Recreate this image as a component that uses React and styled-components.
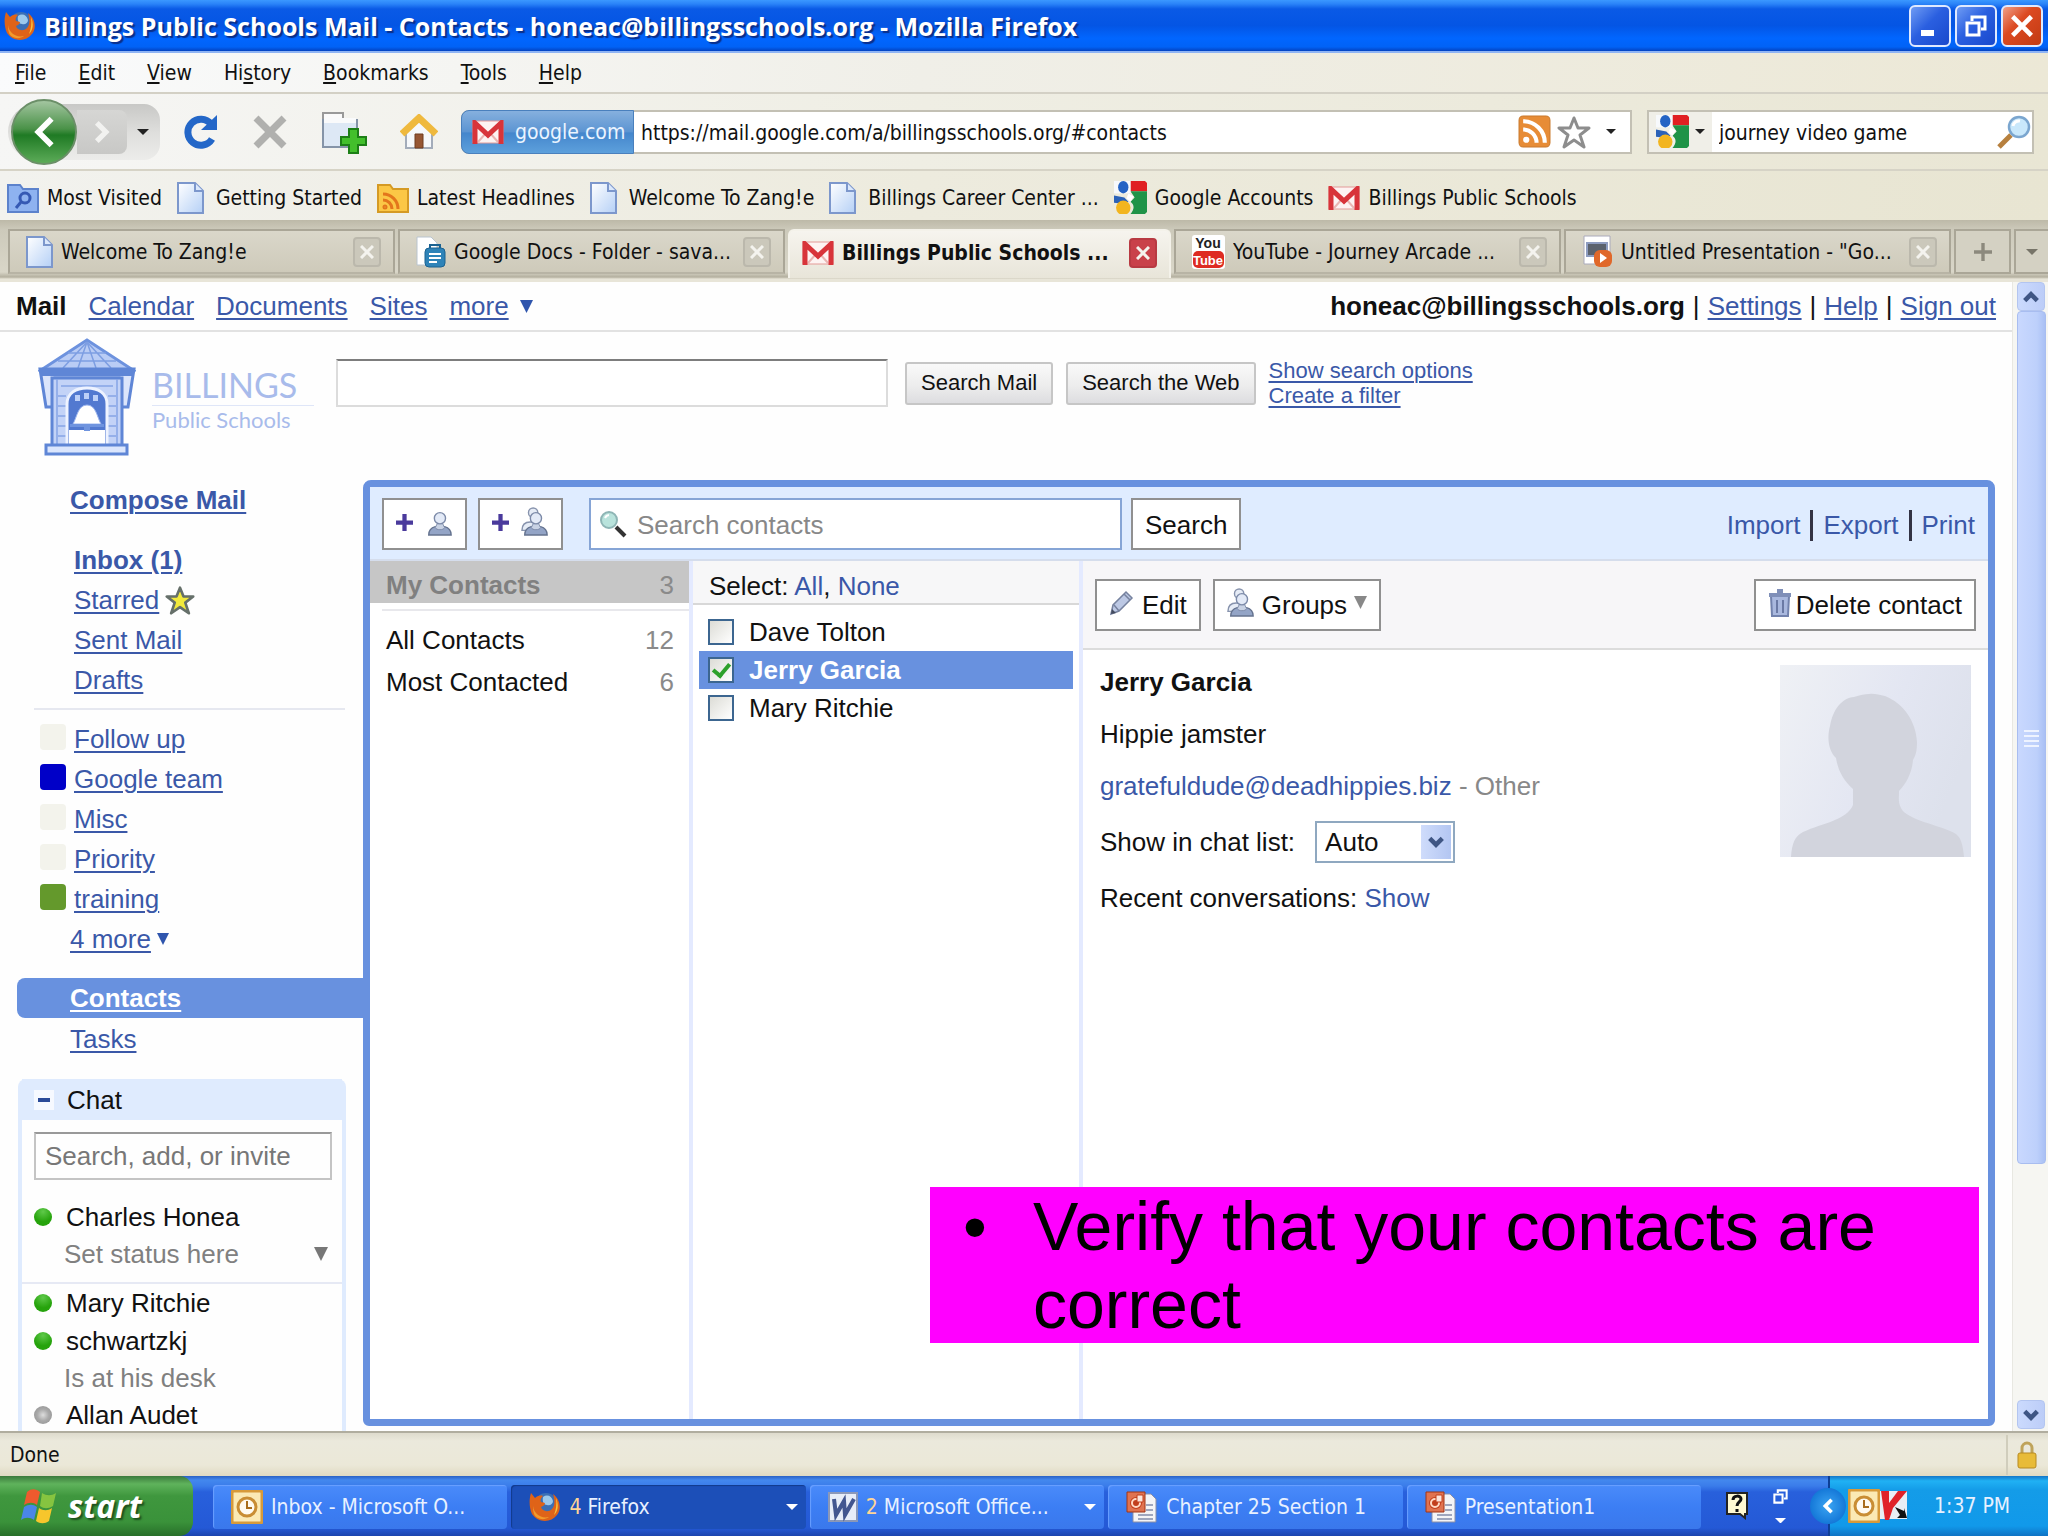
import React from 'react';
import styled, { createGlobalStyle } from 'styled-components';

const chromeFont = '"DejaVu Sans Condensed", "DejaVu Sans", sans-serif';
const pageFont = '"Liberation Sans", Arial, sans-serif';
const linkColor = '#3a58a8';
const panelBlue = '#6891df';
const paleBlue = '#dfebfe';

const GlobalStyle = createGlobalStyle`
  * {
    box-sizing: border-box;
  }

  body {
    margin: 0;
    font-family: ${chromeFont};
    font-size: 21px;
    color: #111;
  }

  button, input, select {
    font: inherit;
    color: inherit;
    margin: 0;
    padding: 0;
    border: 0;
    background: none;
    border-radius: 0;
  }

  svg {
    display: block;
    flex: none;
  }
`;

/* ---------- Window ---------- */

const Window = styled.div`
  display: flex;
  flex-direction: column;
  height: 100vh;
  overflow: hidden;
  white-space: nowrap;
`;

const TitleBar = styled.header`
  display: flex;
  align-items: center;
  gap: 8px;
  height: 53px;
  flex: none;
  padding: 0 5px 0 4px;
  border-bottom: 2px solid #8fb4f4;
  background: linear-gradient(#3b98ff 0, #2a83f8 4px, #0a5ae6 9px, #0455e4 50%, #0166ff 75%, #0162f6 92%, #0443c0);
`;

const WindowTitle = styled.h1`
  flex: 1;
  margin: 0;
  font-family: "Open Sans", "Noto Sans", sans-serif;
  font-weight: bold;
  font-size: 25px;
  line-height: 32px;
  color: #fff;
  text-shadow: 2px 2px 1px #0a2f8a;
`;

const WindowButtons = styled.div`
  display: flex;
  gap: 4px;
`;

const WindowButton = styled.button`
  display: grid;
  place-items: center;
  width: 42px;
  height: 42px;
  border: 2px solid #dfe9ff;
  border-radius: 6px;
  background: ${p => p.$close
    ? 'linear-gradient(135deg, #f0a088, #dc4a22 40%, #c23a12)'
    : 'linear-gradient(135deg, #6f9cf4, #2a5fe0 45%, #1848cc)'};
`;

const MenuBar = styled.nav`
  display: flex;
  align-items: center;
  gap: 32px;
  height: 41px;
  flex: none;
  padding: 0 15px;
  border-bottom: 2px solid #d3d0c5;
  background: linear-gradient(95deg, #fafbfc, #f0efe8 45%, #ece8d6);
`;

const NavBar = styled.div`
  display: flex;
  align-items: center;
  height: 77px;
  flex: none;
  padding: 0 14px 0 8px;
  border-bottom: 2px solid #d6d3c6;
  background: linear-gradient(95deg, #f6f6f5, #efeee4 45%, #e9e6d4);
`;

const Keyhole = styled.div`
  display: flex;
  align-items: center;
  width: 152px;
  height: 56px;
  margin-right: 23px;
  border-radius: 28px 16px 16px 28px;
  background: linear-gradient(#c8c8c6, #dededc 50%, #ececea);
`;

const RoundButton = styled.button`
  display: grid;
  place-items: center;
  width: 66px;
  height: 66px;
  margin: 0 0 0 3px;
  flex: none;
  border-radius: 50%;
  border: 2px solid #6b8f68;
  background: linear-gradient(#a3c5a0, #4a9248 45%, #1f7a24 55%, #5cab58);
`;

const ForwardButton = styled.button`
  display: grid;
  place-items: center;
  width: 50px;
  height: 44px;
  border-radius: 0 8px 8px 0;
  background: linear-gradient(#d6d6d4, #c8c8c6);
`;

const IconButton = styled.button`
  display: grid;
  place-items: center;
  width: ${p => p.$width || 36}px;
  height: 44px;
`;

const NavIcons = styled.div`
  display: flex;
  align-items: center;
  gap: 33px;
  margin-right: 25px;
`;

const LocationBar = styled.div`
  display: flex;
  align-items: center;
  flex: 1;
  height: 44px;
  margin-right: 15px;
  padding-right: 4px;
  border: 2px solid #c3c0b4;
  border-radius: 8px 0 0 8px;
  background: #fff;
`;

const Identity = styled.div`
  display: flex;
  align-items: center;
  gap: 11px;
  align-self: stretch;
  width: 173px;
  margin: -2px 0 -2px -2px;
  padding-left: 10px;
  border: 1px solid #4a80bd;
  border-radius: 8px 0 0 8px;
  color: #eaf4ff;
  background: linear-gradient(#86b0de, #5b94d2 50%, #4486cc 52%, #5da0dc);
`;

const LocationInput = styled.input`
  flex: 1;
  min-width: 0;
  padding: 2px 0 0 7px;
  outline: 0;
`;

const SearchBar = styled.div`
  display: flex;
  align-items: center;
  width: 387px;
  height: 44px;
  border: 2px solid #c3c0b4;
  background: #fff;
`;

const EngineButton = styled.button`
  display: flex;
  align-items: center;
  justify-content: center;
  gap: 6px;
  align-self: stretch;
  width: 63px;
  background: #f0efe8;
`;

const SearchInput = styled.input`
  flex: 1;
  min-width: 0;
  padding: 2px 0 0 7px;
  outline: 0;
`;

const BookmarksBar = styled.nav`
  display: flex;
  align-items: center;
  gap: 15px;
  height: 49px;
  flex: none;
  padding: 4px 7px 0;
  background: linear-gradient(95deg, #f2f2ee, #edebde 45%, #e8e5d2);
`;

const Bookmark = styled.a`
  display: flex;
  align-items: center;
  gap: ${p => p.$gap || 8}px;
  color: #111;
  text-decoration: none;
`;

const TabStrip = styled.div`
  display: flex;
  align-items: flex-end;
  height: 62px;
  flex: none;
  padding: 8px 0 4px 8px;
  background: linear-gradient(#bdb9a8 0, #cdcabb 10px, #d9d6c8 52px, #b4b09f 57px, #e8e5d8 59px);
`;

const Tab = styled.div`
  display: flex;
  align-items: center;
  gap: 8px;
  flex: 1 1 0;
  min-width: 0;
  height: 45px;
  margin: 0 3px 4px 0;
  padding: 0 12px 0 16px;
  border: 2px solid #aaa697;
  border-bottom-color: #b8b4a5;
  background: linear-gradient(#dad7ca, #cecaba);

  ${p => p.$active && `
    height: 49px;
    margin-bottom: 0;
    padding: 0 12px 4px;
    border: 2px solid #f4f2ea;
    border-bottom: 0;
    border-radius: 6px 6px 0 0;
    background: linear-gradient(#f6f4ee, #e8e5d9);
    font-weight: bold;
  `}
`;

const TabTitle = styled.button`
  flex: 1;
  min-width: 0;
  overflow: hidden;
  text-align: left;
  white-space: nowrap;
`;

const TabClose = styled.button`
  display: grid;
  place-items: center;
  width: 28px;
  height: 30px;
  flex: none;
  border: 2px solid ${p => (p.$active ? '#b83a42' : '#bbb8ac')};
  border-radius: 4px;
  background: ${p => (p.$active ? '#c9414a' : '#cbc8bb')};
`;

const TabTool = styled.button`
  display: grid;
  place-items: center;
  width: ${p => p.$width}px;
  height: 45px;
  margin: 0 3px 4px 0;
  border: 2px solid #aaa697;
  background: #d4d1c3;

  &:last-child {
    margin-right: 0;
    border-right: 0;
  }
`;

/* ---------- Page ---------- */

const Viewport = styled.div`
  position: relative;
  display: flex;
  flex: 1;
  min-height: 0;
  border-bottom: 2px solid #b0ad9f;
`;

const Page = styled.div`
  display: flex;
  flex-direction: column;
  flex: 1;
  min-width: 0;
  overflow: hidden;
  background: #fefefe;
  font-family: ${pageFont};
  font-size: 26px;
`;

const GoogleBar = styled.nav`
  display: flex;
  align-items: center;
  gap: 22px;
  height: 50px;
  flex: none;
  padding: 0 16px;
  border-bottom: 2px solid #e2e2e2;
`;

const MoreApps = styled.span`
  display: flex;
  align-items: center;
  gap: 11px;
`;

const Account = styled.div`
  display: flex;
  gap: 8px;
  margin-left: auto;
`;

const PageLink = styled.a`
  color: ${linkColor};
  font-weight: ${p => (p.$bold ? 'bold' : 'normal')};
  text-underline-offset: 3px;
  text-decoration: ${p => (p.$plain ? 'none' : 'underline')};
  text-decoration-thickness: 2px;
`;

const Masthead = styled.div`
  display: flex;
  align-items: flex-start;
  height: 148px;
  flex: none;
  padding: 6px 0 0 38px;
`;

const Brand = styled.div`
  display: flex;
  gap: 16px;
  width: 298px;
`;

const BrandText = styled.div`
  flex: 1;
  margin-right: 22px;
  padding-top: 26px;
  font-family: Lato, sans-serif;
  font-size: 22px;
  line-height: 27px;
  color: #a8bbeb;

  strong {
    display: block;
    font-weight: normal;
    font-size: 34px;
    line-height: 41px;
    border-bottom: 1px solid #dfe6f8;
  }
`;

const MailSearch = styled.form`
  display: flex;
  align-items: center;
  gap: 13px;
  padding-top: 20px;
`;

const MailInput = styled.input`
  width: 552px;
  height: 48px;
  margin-right: 4px;
  border: 2px solid #dcdcdc;
  border-top-color: #7d7d7d;
  background: #fff;
`;

const MailButton = styled.button`
  height: 43px;
  padding: 0 14px;
  border: 2px solid #c6c6c6;
  border-radius: 3px;
  font-size: 22px;
  background: linear-gradient(#f9f9f9, #ededed 55%, #dddde0);
`;

const SearchLinks = styled.div`
  display: flex;
  flex-direction: column;
  font-size: 22px;
  line-height: 25px;
`;

const Columns = styled.div`
  display: flex;
  flex: 1;
  min-height: 0;
  padding-right: 17px;
`;

const Sidebar = styled.aside`
  width: 363px;
  flex: none;
  line-height: 40px;
`;

const NavBlock = styled.div`
  display: flex;
  flex-direction: column;
  align-items: flex-start;
  padding: ${p => p.$pad};
`;

const Rule = styled.hr`
  height: 2px;
  margin: 8px 18px 9px 34px;
  border: 0;
  background: #e6e8f0;
`;

const NavRow = styled.div`
  display: flex;
  align-items: center;
  gap: 6px;
  height: 40px;
`;

const Swatch = styled.span`
  width: 26px;
  height: 26px;
  margin: 0 2px 4px 0;
  border-radius: 4px;
  background: ${p => p.$color};
`;

const ContactsTab = styled.a`
  display: block;
  height: 40px;
  margin: 19px 0 1px 17px;
  padding-left: 53px;
  border-radius: 8px 0 0 8px;
  background: ${panelBlue};
  color: #fff;
  font-weight: bold;
  text-underline-offset: 3px;
`;

const ChatBox = styled.section`
  margin: 20px 17px 0 18px;
  border: solid ${paleBlue};
  border-width: 0 4px;
  border-radius: 8px 8px 0 0;
  line-height: 36px;
`;

const ChatHeader = styled.h2`
  display: flex;
  align-items: center;
  gap: 13px;
  height: 41px;
  margin: 0;
  padding-left: 12px;
  background: ${paleBlue};
  font-size: 26px;
  font-weight: normal;
`;

const Collapse = styled.button`
  display: grid;
  place-items: center;
  width: 20px;
  height: 20px;
  background: #f6f9ff;

  &::after {
    content: '';
    width: 12px;
    height: 4px;
    background: #2a4a98;
  }
`;

const ChatInput = styled.input`
  display: block;
  width: 298px;
  height: 48px;
  margin: 12px 12px 18px;
  padding: 0 9px;
  border: 2px solid #c4c4c4;
  border-top-color: #999;
  font-size: 26px;

  &::placeholder {
    color: #777;
  }
`;

const Person = styled.div`
  display: flex;
  align-items: center;
  gap: 14px;
  height: 38px;
  padding-left: 12px;

  &::before {
    content: '';
    width: 18px;
    height: 18px;
    border-radius: 50%;
    background: ${p => (p.$away
      ? 'radial-gradient(#ddd, #aaa 45%, #8c8c8c)'
      : 'radial-gradient(circle at 50% 20%, #5fc94a, #26a30c 60%)')};
  }
`;

const StatusLine = styled.div`
  display: flex;
  align-items: center;
  justify-content: space-between;
  height: 36px;
  padding: 0 14px 0 42px;
  color: #808080;
`;

const MyStatus = styled.div`
  padding-bottom: 10px;
  border-bottom: 2px solid #e6e9f4;
`;

/* ---------- Contacts panel ---------- */

const Panel = styled.main`
  display: flex;
  flex-direction: column;
  flex: 1;
  min-width: 0;
  margin-bottom: 5px;
  border: 7px solid ${panelBlue};
  border-radius: 8px 8px 6px 6px;
  background: #fff;
`;

const PanelBar = styled.div`
  display: flex;
  align-items: center;
  gap: 11px;
  height: 74px;
  flex: none;
  padding: 2px 13px 0 12px;
  border-bottom: 2px solid #d5ddec;
  background: #dfecff;
`;

const BoxButton = styled.button`
  display: flex;
  align-items: center;
  justify-content: center;
  gap: ${p => p.$gap || 0}px;
  height: 52px;
  padding: 2px 12px 0;
  border: 2px solid #909090;
  background: #fff;

  svg {
    margin-bottom: 6px;
  }
`;

const ContactSearch = styled.label`
  display: flex;
  align-items: center;
  gap: 10px;
  width: 533px;
  height: 52px;
  margin: 0 -2px 0 15px;
  padding-left: 8px;
  border: 2px solid #86a5d6;
  background: #fff;

  input {
    flex: 1;
    min-width: 0;
    padding-top: 2px;
    outline: 0;
  }

  input::placeholder {
    color: #888;
  }
`;

const PanelLinks = styled.div`
  display: flex;
  align-items: center;
  margin-left: auto;
  padding-top: 2px;

  a + a {
    margin-left: 10px;
    padding-left: 10px;
    border-left: 3px solid #334;
  }
`;

const PanelBody = styled.div`
  display: flex;
  flex: 1;
  min-height: 0;
`;

const GroupList = styled.div`
  width: 323px;
  flex: none;
  border-right: 4px solid #e4eaff;
`;

const Group = styled.button`
  display: flex;
  justify-content: space-between;
  align-items: center;
  width: 100%;
  height: 42px;
  padding: 0 15px 0 16px;

  span {
    color: #8a8a8a;
  }

  ${p => p.$active && `
    padding-top: 6px;
    background: #c6c6c6;
    color: #808080;
    font-weight: bold;

    span {
      font-weight: normal;
    }
  `}
`;

const GroupRule = styled.hr`
  height: 2px;
  margin: 6px 0 8px 12px;
  border: 0;
  background: #e8e8ec;
`;

const ContactList = styled.div`
  width: 390px;
  flex: none;
  border-right: 4px solid #e4eaff;
`;

const SelectBar = styled.div`
  display: flex;
  align-items: center;
  height: 44px;
  margin-bottom: 8px;
  padding: 8px 16px 0;
  border-bottom: 2px solid #d8d8d8;
  background: #f7f7f8;
`;

const Contact = styled.label`
  display: flex;
  align-items: center;
  gap: 15px;
  height: 38px;
  margin: 0 6px;
  padding-left: 9px;

  ${p => p.$active && `
    background: ${panelBlue};
    color: #fff;
    font-weight: bold;
  `}
`;

const Check = styled.input`
  display: grid;
  place-items: center;
  appearance: none;
  width: 26px;
  height: 26px;
  border: 2px solid #3c6690;
  background: linear-gradient(135deg, #dcdcd6, #fff);

  &:checked::after {
    content: '';
    width: 7px;
    height: 13px;
    margin-bottom: 4px;
    border: solid #2da12b;
    border-width: 0 4px 4px 0;
    transform: rotate(40deg);
  }
`;

const Detail = styled.section`
  flex: 1;
  min-width: 0;
`;

const DetailBar = styled.div`
  display: flex;
  align-items: center;
  gap: 12px;
  height: 89px;
  padding: 0 12px;
  border-bottom: 2px solid #dcdcdc;
  background: #f7f6f8;
`;

const Spacer = styled.span`
  flex: 1;
`;

const DetailBody = styled.div`
  display: flex;
  justify-content: space-between;
  align-items: flex-start;
  padding: 15px 17px 0;
`;

const Fields = styled.div`
  display: flex;
  flex-direction: column;
  gap: 22px;
  padding-top: 2px;
  line-height: 30px;
`;

const Name = styled.h2`
  margin: 0;
  font-size: 26px;
`;

const Muted = styled.span`
  color: #888;
`;

const SelectRow = styled.div`
  display: flex;
  align-items: center;
  gap: 20px;
  height: 38px;
`;

const SelectBox = styled.span`
  position: relative;
  display: block;

  select {
    appearance: none;
    width: 140px;
    height: 42px;
    padding-left: 8px;
    border: 2px solid #8fa8c0;
    background: #fff;
  }
`;

/* sits over the native select, so clicks go through it */
const SelectArrow = styled.span`
  position: absolute;
  top: 4px;
  right: 4px;
  display: grid;
  place-items: center;
  width: 30px;
  height: 34px;
  background: linear-gradient(90deg, #cfdcfb, #b3c6f2);
  pointer-events: none;
`;

const Note = styled.ul`
  position: absolute;
  right: 69px;
  bottom: 88px;
  width: 1049px;
  margin: 0;
  padding: 0 60px 0 103px;
  background: #f0f;
  color: #000;
  font-family: ${pageFont};
  font-size: 68px;
  line-height: 78px;
  white-space: normal;
  list-style: none;

  li::before {
    content: '•';
    float: left;
    margin-left: -70px;
  }
`;

const ScrollBar = styled.div`
  display: flex;
  flex-direction: column;
  width: 36px;
  flex: none;
  padding: 0 2px 2px 4px;
  border-left: 1px solid #e8e8e2;
  background: #f6f6f2;
`;

const ScrollButton = styled.button`
  display: grid;
  place-items: center;
  width: 28px;
  height: 29px;
  flex: none;
  border: 1px solid #b3c5f0;
  border-radius: 4px;
  background: linear-gradient(90deg, #cbdafd, #bccdf8);
`;

const ScrollThumb = styled.div`
  display: grid;
  place-items: center;
  flex: 853;
  border: 1px solid #a8bdf0;
  border-radius: 4px;
  background: linear-gradient(90deg, #c9d8fe, #bdd0fb 70%, #a9c0f4);
`;

const ScrollTrack = styled.div`
  flex: 236;
`;

/* ---------- Status bar and taskbar ---------- */

const StatusBar = styled.footer`
  display: flex;
  align-items: center;
  justify-content: space-between;
  height: 43px;
  flex: none;
  padding: 0 2px 0 10px;
  background: linear-gradient(#dedbcd, #ebe9dc 8px, #ebe8d8 32px, #e0dac2);
`;

const LockCell = styled.span`
  display: grid;
  place-items: center;
  width: 40px;
  height: 40px;
  border-left: 2px solid #d0cdbc;
`;

const TaskBar = styled.footer`
  display: flex;
  height: 60px;
  flex: none;
  color: #e8f1ff;
  background: linear-gradient(#2a62c4 0, #4388ee 4px, #3a7cea 10px, #2860dc 16px, #2459d6 52px, #1b44ae);
`;

const Start = styled.button`
  display: flex;
  align-items: center;
  gap: 10px;
  width: 193px;
  margin-right: 20px;
  padding-left: 20px;
  border-radius: 0 14px 14px 0;
  background: linear-gradient(#3c7a3c, #5fb35c 8px, #3f973e 20px, #3a923a 46px, #276f29);
  color: #fff;
  font-family: "Open Sans", "Noto Sans", sans-serif;
  font-size: 32px;
  line-height: 36px;
  font-weight: bold;
  font-style: italic;
  text-shadow: 2px 2px 2px #1d4f1d;
`;

const Tasks = styled.div`
  display: flex;
  flex: 1;
  gap: 4px;
  padding: 9px 0 7px;
`;

const Task = styled.button`
  display: flex;
  align-items: center;
  gap: 8px;
  flex: 1 1 0;
  min-width: 0;
  padding: 0 8px 0 18px;
  border-radius: 4px;
  box-shadow: inset 1px 1px 1px ${p => (p.$active ? '#123a8c' : '#6ba0ff')};
  background: ${p => (p.$active ? '#1c4fb8' : 'linear-gradient(#4a8bfa, #3c7ef4 50%, #3a78ec)')};
`;

const TaskText = styled.span`
  flex: 1;
  min-width: 0;
  overflow: hidden;
  text-align: left;
`;

const Count = styled.span`
  color: #ffd596;
`;

const Language = styled.div`
  display: flex;
  align-items: center;
  gap: 22px;
  width: 127px;
  padding-left: 24px;
`;

const LanguageTools = styled.div`
  display: flex;
  flex-direction: column;
  align-items: center;
  gap: 14px;
`;

const Tray = styled.div`
  display: flex;
  align-items: center;
  width: 220px;
  border-left: 2px solid #0d3f96;
  background: linear-gradient(#1577c8 0, #20b1f4 5px, #149ce8 14px, #1199ea 50px, #0f73c4);

  time {
    margin-left: 26px;
  }
`;

const TrayArrow = styled.button`
  display: grid;
  place-items: center;
  width: 36px;
  height: 36px;
  margin: 0 2px 0 -20px;
  border-radius: 50%;
  background: radial-gradient(#3aa4f2, #1578d8 70%, #0f5fc0);
`;

/* ---------- Icons ---------- */

const Caret = ({ size = 14, color = '#222', tall }) => (
  <svg width={size} height={tall ? size : size / 2} viewBox="0 0 10 10" preserveAspectRatio="none">
    <path d="M0 0h10L5 10z" fill={color} />
  </svg>
);

const Chevron = ({ size = 18, color = '#3f5684', rotate = 0, stroke = 5 }) => (
  <svg width={size} height={size} viewBox="0 0 20 20">
    <path d="M3 6l7 7 7-7" fill="none" stroke={color} strokeWidth={stroke} transform={`rotate(${rotate} 10 10)`} />
  </svg>
);

const PageIcon = () => (
  <svg width="27" height="32" viewBox="0 0 27 32">
    <defs>
      <linearGradient id="sheet" x1="0" y1="0" x2="1" y2="1">
        <stop offset="0" stopColor="#fff" />
        <stop offset="1" stopColor="#b5d0f6" />
      </linearGradient>
    </defs>
    <path d="M1 1h17l8 8v22H1z" fill="url(#sheet)" stroke="#7c97cc" strokeWidth="2" />
    <path d="M18 1v8h8" fill="#dbe8fb" stroke="#7c97cc" strokeWidth="2" />
  </svg>
);

const Firefox = ({ size = 32 }) => (
  <svg width={size} height={size} viewBox="0 0 32 32">
    <circle cx="17" cy="13" r="11" fill="#3b6fb5" />
    <path d="M14 6c4-3 9-1 10 4 0 3-3 5-6 4-3 0-5-3-4-8z" fill="#9cc9ec" />
    <path d="M2 2l4 5c2-2 5-3 8-2-2 2-3 4-2 6l4 1c0 2-2 3-4 4 1 4 7 6 11 2 3-3 3-9 1-15 7 5 9 15 4 21-6 8-19 8-25-1C0 17 0 8 2 2z" fill="#df6318" />
    <path d="M4 15c1 8 8 13 16 11-5 4-13 2-15-3-1-3-1-6-1-8z" fill="#f29a2b" />
    <path d="M27 7c3 7 2 13-2 17 2-5 3-11 2-17z" fill="#f8c33c" />
  </svg>
);

const Gmail = ({ size = 32 }) => (
  <svg width={size} height={size * 0.75} viewBox="0 0 32 24">
    <path d="M1 1h30v22H1z" fill="#fdf3f2" stroke="#e39a98" />
    <path d="M6 22l8-9M26 22l-8-9" stroke="#eab5b2" strokeWidth="2" />
    <path d="M3 24V3l13 12L29 3v21" fill="none" stroke="#d8343a" strokeWidth="5" />
  </svg>
);

const Google = () => (
  <svg width="33" height="33" viewBox="0 0 32 32">
    <path d="M16 0h14l2 2v8H16z" fill="#e01f22" />
    <path d="M16 10h16v20l-2 2H16c4-5 4-9 0-12l4-4z" fill="#1f9347" />
    <path d="M0 14l10 2 4 4-6 2-8-1z" fill="#2b62b8" />
    <path d="M0 0h16v12H0z" fill="#f7f9fc" />
    <ellipse cx="9" cy="6" rx="5" ry="6" fill="#2463c4" />
    <circle cx="9" cy="26" r="7" fill="#f2b51f" />
    <path d="M14 12l5 3-3 5-4-3z" fill="#fff" />
  </svg>
);

const Rss = ({ size = 33 }) => (
  <svg width={size} height={size} viewBox="0 0 32 32">
    <rect x="1" y="1" width="30" height="30" rx="4" fill="#e78c36" stroke="#c9792c" />
    <circle cx="8" cy="24" r="3" fill="#fff" />
    <path d="M5 14a13 13 0 0113 13M5 6a21 21 0 0121 21" fill="none" stroke="#fff" strokeWidth="4" />
  </svg>
);

const FolderIcon = ({ rss }) => (
  <svg width="32" height="30" viewBox="0 0 32 30">
    <path d="M1 2h12l3 4h15v23H1z" fill={rss ? '#fbc746' : '#8eb2f0'} stroke={rss ? '#d59a24' : '#5c82cc'} strokeWidth="2" />
    {rss ? (
      <g fill="none" stroke="#e3761c" strokeWidth="3">
        <path d="M6 17a9 9 0 019 9M6 11a15 15 0 0115 15" />
        <circle cx="8" cy="24" r="1" />
      </g>
    ) : (
      <g fill="none" stroke="#3559b4" strokeWidth="3">
        <circle cx="18" cy="15" r="5" />
        <path d="M14 19l-5 6" />
      </g>
    )}
  </svg>
);

const Reload = () => (
  <svg width="34" height="34" viewBox="0 0 34 34">
    <path d="M27 9A13 13 0 1028 24" fill="none" stroke="#2467c8" strokeWidth="7" />
    <path d="M33 0v15H17z" fill="#2467c8" />
  </svg>
);

const Stop = () => (
  <svg width="34" height="34" viewBox="0 0 34 34">
    <path d="M3 3l28 28M31 3L3 31" stroke="#b0b0ae" strokeWidth="7" />
  </svg>
);

const NewTab = () => (
  <svg width="46" height="44" viewBox="0 0 46 44">
    <path d="M2 10V3h20v7" fill="#fafafa" stroke="#999" strokeWidth="2" />
    <path d="M2 10h34v27H2z" fill="#dde8f5" stroke="#8594a8" strokeWidth="2" />
    <path d="M3 8h32v5H3z" fill="#f9fafb" />
    <path d="M28 19h9v8h8v8h-8v8h-9v-8h-8v-8h8z" fill="#43bf2c" stroke="#1d7f17" strokeWidth="2" />
  </svg>
);

const Home = () => (
  <svg width="38" height="36" viewBox="0 0 38 36">
    <path d="M6 18L19 7l13 11v16H6z" fill="#f6f8fb" stroke="#a3acba" strokeWidth="2" />
    <path d="M2 20L19 4l17 16" fill="none" stroke="#efb93e" strokeWidth="7" />
    <path d="M15 20h8v14h-8z" fill="#965634" stroke="#6f3c20" />
  </svg>
);

const Star = ({ size = 34, fill = '#fff', stroke = '#8d8d8d' }) => (
  <svg width={size} height={size} viewBox="0 0 34 34">
    <path d="M17 3l4 10h11l-9 7 4 12-10-7-10 7 4-12-9-7h11z" fill={fill} stroke={stroke} strokeWidth="3" strokeLinejoin="round" />
  </svg>
);

const Magnifier = ({ size = 34 }) => (
  <svg width={size} height={size} viewBox="0 0 34 34">
    <path d="M14 20L2 32" stroke="#b7803e" strokeWidth="5" />
    <circle cx="22" cy="12" r="10" fill="#c9e8fb" stroke="#7ba6cf" strokeWidth="2.5" />
    <path d="M16 11a6 6 0 017-5" fill="none" stroke="#fff" strokeWidth="3" />
  </svg>
);

const SmallMagnifier = () => (
  <svg width="28" height="28" viewBox="0 0 28 28">
    <path d="M17 17l9 9" stroke="#333" strokeWidth="4" />
    <circle cx="10" cy="10" r="8" fill="#b9e3dc" stroke="#8eb5b5" strokeWidth="2" />
    <path d="M6 8a5 5 0 014-3" stroke="#fff" strokeWidth="2" fill="none" />
  </svg>
);

const DocsIcon = () => (
  <svg width="30" height="32" viewBox="0 0 30 32">
    <path d="M1 1h14l6 6v22H1z" fill="#fff" stroke="#b9c4cf" />
    <rect x="9" y="12" width="20" height="19" rx="4" fill="#2e83b8" stroke="#1b6291" />
    <path d="M14 12V9h10v3" fill="none" stroke="#1b6291" strokeWidth="2" />
    <path d="M13 18h12M13 22h12M13 26h8" stroke="#fff" strokeWidth="2" />
  </svg>
);

const YouTube = () => (
  <svg width="33" height="34" viewBox="0 0 33 34">
    <rect width="33" height="34" rx="3" fill="#fff" />
    <rect x="1" y="16" width="31" height="17" rx="5" fill="#de2b22" />
    <text x="16" y="13" textAnchor="middle" fontFamily="Liberation Sans" fontWeight="bold" fontSize="14" fill="#222">You</text>
    <text x="16" y="30" textAnchor="middle" fontFamily="Liberation Sans" fontWeight="bold" fontSize="13" fill="#fff">Tube</text>
  </svg>
);

const Slides = () => (
  <svg width="31" height="33" viewBox="0 0 31 33">
    <path d="M2 1h26v28H2z" fill="#fff" stroke="#aab" />
    <path d="M5 8h20v13H5z" fill="#5b626d" stroke="#8d9cc0" strokeWidth="2" />
    <rect x="12" y="15" width="18" height="17" rx="6" fill="#e0682a" />
    <path d="M18 18l7 5-7 5z" fill="#fff" />
  </svg>
);

const CloseX = ({ color = '#f4f3ee', size = 14 }) => (
  <svg width={size} height={size} viewBox="0 0 14 14">
    <path d="M1 1l12 12M13 1L1 13" stroke={color} strokeWidth="3" />
  </svg>
);

const BellTower = () => (
  <svg width="98" height="118" viewBox="0 0 98 118">
    <path d="M49 2L3 32h92z" fill="#b9ccf5" stroke="#6d92de" strokeWidth="3" />
    <path d="M49 4L25 30M49 4l-9 26M49 4l9 26M49 4l24 26M30 15h38M20 23h58" stroke="#7d9ee2" strokeWidth="1.5" fill="none" />
    <path d="M2 31h94l-6 38h-9V40H17v29H8z" fill="#dbe5fb" stroke="#5f86d6" strokeWidth="3" />
    <path d="M3 31h92v7H3z" fill="#5f86d6" />
    <path d="M14 40h70v68H14z" fill="#c3d3f7" stroke="#5f86d6" strokeWidth="3" />
    <path d="M19 41v66M79 41v66M23 48h52M20 58h8M70 58h8M20 68h8M70 68h8M20 78h8M70 78h8M20 88h8M70 88h8M20 98h8M70 98h8" stroke="#86a5e6" strokeWidth="1.5" />
    <path d="M29 108V66c0-11 9-16 20-16s20 5 20 16v42z" fill="#5279d0" stroke="#eef3ff" strokeWidth="3" />
    <path d="M31 92h36v15H31z" fill="#fff" />
    <path d="M37 57h5v6h-5zM46 55h5v6h-5zM55 57h5v6h-5z" fill="#bdd0f8" />
    <path d="M49 67c-9 0-10 12-14 19h28c-4-7-5-19-14-19z" fill="#fff" stroke="#9db6ee" />
    <path d="M32 86h34v3H32zM46 89h6v4h-6z" fill="#6f94df" />
    <path d="M8 107h81v9H8z" fill="#dbe6fd" stroke="#5f86d6" strokeWidth="3" />
  </svg>
);

const PersonIcon = ({ group }) => (
  <svg width="28" height="32" viewBox="0 0 30 32">
    {group && (
      <g fill="#e6ecf6" stroke="#8793ad" strokeWidth="1.5">
        <path d="M1 25c0-6 3-9 9-9s9 3 9 9z" />
        <circle cx="13" cy="6" r="5" />
      </g>
    )}
    <path d="M4 30c0-6 3-8 7-9h10c4 1 7 3 7 9z" fill="#93a4c6" stroke="#65738f" strokeWidth="1.5" />
    <path d="M11 22c1 3 9 3 10 0l-3-6h-4z" fill="#c8d2e4" stroke="#7c8aa8" />
    <circle cx="16" cy="12" r="6" fill="#e3eaf7" stroke="#7c8aa8" strokeWidth="1.5" />
  </svg>
);

const Plus = ({ color = '#4a3a9c', size = 17, stroke = 4 }) => (
  <svg width={size} height={size} viewBox="0 0 16 16">
    <path d="M8 0v16M0 8h16" stroke={color} strokeWidth={stroke} />
  </svg>
);

const Pencil = () => (
  <svg width="26" height="26" viewBox="0 0 26 26">
    <path d="M2 24l2-9L17 2l6 6L10 21z" fill="#bcc8e4" stroke="#76829f" strokeWidth="1.5" />
    <path d="M5 15l5 6M15 4l6 6" stroke="#76829f" strokeWidth="1.5" />
    <path d="M2 24l1-5 4 4z" fill="#444c60" />
  </svg>
);

const Trash = () => (
  <svg width="24" height="30" viewBox="0 0 24 30">
    <path d="M3 8h18l-1 20H4z" fill="#a9b8de" stroke="#7282ad" strokeWidth="2" />
    <path d="M1 5h22v4H1zM9 1h6v4H9z" fill="#7f8fb8" />
    <path d="M9 12v13M15 12v13" stroke="#6a79a4" strokeWidth="2" />
  </svg>
);

const Silhouette = () => (
  <svg width="191" height="192" viewBox="0 0 191 192">
    <defs>
      <linearGradient id="photo" x1="0" y1="0" x2="1" y2="0.4">
        <stop offset="0" stopColor="#eff1f5" />
        <stop offset="0.6" stopColor="#e3e6f2" />
        <stop offset="1" stopColor="#dde1ec" />
      </linearGradient>
    </defs>
    <path d="M0 0h191v192H0z" fill="url(#photo)" />
    <path d="M11 192c1-14 4-21 12-25 20-9 44-12 50-27v-16c-9-8-15-18-17-31-8-8-9-21-6-32 3-17 12-28 24-29 6-2 11-3 15-3 5-1 10 1 16 2 18 7 31 25 32 46 0 8-1 13-4 18-1 12-6 23-14 31 0 8-1 11 2 17 5 12 40 17 55 26 5 4 7 11 8 23z" fill="#d2d4dd" />
  </svg>
);

const Lock = () => (
  <svg width="20" height="28" viewBox="0 0 20 28">
    <path d="M5 13V7a5 5 0 0110 0v6" fill="none" stroke="#bfa35a" strokeWidth="3" />
    <rect x="1" y="12" width="18" height="15" rx="2" fill="#e8bb38" stroke="#b78a22" />
  </svg>
);

const WindowsFlag = () => (
  <svg width="38" height="36" viewBox="0 0 38 36">
    <path d="M7 4c5-4 9-3 13 0l-3 13c-4-3-8-3-13 0z" fill="#ee5a2e" />
    <path d="M22 5c5 3 9 3 14 0l-3 13c-5 3-9 3-13 0z" fill="#86c440" />
    <path d="M4 19c5-3 9-3 13 0l-3 13c-4-3-9-3-13 0z" fill="#4a86e8" />
    <path d="M19 20c4 3 9 3 13 0l-3 13c-4 3-9 3-13 0z" fill="#f7c62c" />
  </svg>
);

const ClockIcon = () => (
  <svg width="32" height="34" viewBox="0 0 32 34">
    <rect x="1" y="1" width="30" height="32" rx="2" fill="#fbe9b4" stroke="#d79a3a" strokeWidth="3" />
    <circle cx="16" cy="17" r="9" fill="#fffaf0" stroke="#c98d34" strokeWidth="3" />
    <path d="M16 11v7h5" fill="none" stroke="#a86c1c" strokeWidth="2" />
  </svg>
);

const WordIcon = () => (
  <svg width="30" height="30" viewBox="0 0 30 30">
    <path d="M1 1h28v28H1z" fill="#e7edf8" stroke="#8b98b8" strokeWidth="2" />
    <path d="M6 7l2 16 8-14 1 14 9-16" fill="none" stroke="#42568f" strokeWidth="4" />
  </svg>
);

const PowerPointIcon = () => (
  <svg width="32" height="32" viewBox="0 0 32 32">
    <path d="M7 3h18l5 5v23H7z" fill="#f4f4f6" stroke="#8b8fa6" />
    <path d="M20 14h7M20 19h7M12 24h15M12 28h15" stroke="#9fa6bd" strokeWidth="2" />
    <path d="M1 1h18v20H1z" fill="#e07350" stroke="#a13415" />
    <circle cx="10" cy="12" r="6" fill="#c23f1c" />
    <circle cx="10" cy="12" r="4" fill="none" stroke="#ffd9c4" strokeWidth="2" />
    <path d="M11 4h6v7h-6z" fill="#fbe6dc" stroke="#c23f1c" />
  </svg>
);

const HelpIcon = () => (
  <svg width="26" height="30" viewBox="0 0 26 30">
    <path d="M2 2h20v21h-2v4l-5-4H2z" fill="#fff9d2" stroke="#222" strokeWidth="2" />
    <path d="M8 9c0-5 8-5 8-1 0 3-4 3-4 7M12 18v3" fill="none" stroke="#111" strokeWidth="3" />
  </svg>
);

const RestoreIcon = ({ size = 22 }) => (
  <svg width={size} height={size} viewBox="0 0 22 22">
    <path d="M7 6V2h13v12h-4" fill="none" stroke="#fff" strokeWidth="3" />
    <path d="M2 8h12v12H2z" fill="none" stroke="#fff" strokeWidth="3" />
  </svg>
);

const Antivirus = () => (
  <svg width="28" height="32" viewBox="0 0 28 32">
    <path d="M0 1h27v28H0z" fill="#e9eef5" />
    <path d="M1 1h8v12l9-12h9L13 18l-4 12H5z" fill="#e0222a" />
    <path d="M15 17l9 4v-3l3 10H17l3-3z" fill="#111" />
  </svg>
);

/* ---------- Data ---------- */

const menus = [['', 'F', 'ile'], ['', 'E', 'dit'], ['', 'V', 'iew'], ['Hi', 's', 'tory'], ['', 'B', 'ookmarks'], ['', 'T', 'ools'], ['', 'H', 'elp']];

const bookmarks = [
  { icon: <FolderIcon />, label: 'Most Visited' },
  { icon: <PageIcon />, label: 'Getting Started', gap: 12 },
  { icon: <FolderIcon rss />, label: 'Latest Headlines' },
  { icon: <PageIcon />, label: 'Welcome To Zang!e', gap: 12 },
  { icon: <PageIcon />, label: 'Billings Career Center ...', gap: 12 },
  { icon: <Google />, label: 'Google Accounts' },
  { icon: <Gmail />, label: 'Billings Public Schools' },
];

const tabs = [
  { icon: <PageIcon />, label: 'Welcome To Zang!e' },
  { icon: <DocsIcon />, label: 'Google Docs - Folder - sava...' },
  { icon: <Gmail />, label: 'Billings Public Schools ...', active: true },
  { icon: <YouTube />, label: 'YouTube - Journey Arcade ...' },
  { icon: <Slides />, label: 'Untitled Presentation - "Go...' },
];

const labels = [
  ['Follow up', '#f3f3ec'],
  ['Google team', '#0000c8'],
  ['Misc', '#f3f3ec'],
  ['Priority', '#f3f3ec'],
  ['training', '#64992c'],
];

const contacts = ['Dave Tolton', 'Jerry Garcia', 'Mary Ritchie'];

const App = () => (
  <Window>
    <GlobalStyle />

    <TitleBar>
      <Firefox />
      <WindowTitle>Billings Public Schools Mail - Contacts - honeac@billingsschools.org - Mozilla Firefox</WindowTitle>
      <WindowButtons>
        <WindowButton aria-label="Minimize">
          <svg width="24" height="24" viewBox="0 0 24 24"><path d="M3 16h13v6H3z" fill="#fff" /></svg>
        </WindowButton>
        <WindowButton aria-label="Restore"><RestoreIcon /></WindowButton>
        <WindowButton aria-label="Close" $close><CloseX color="#fff" size={22} /></WindowButton>
      </WindowButtons>
    </TitleBar>

    <MenuBar>
      {menus.map(([before, key, after]) => (
        <button key={key + after}>{before}<u>{key}</u>{after}</button>
      ))}
    </MenuBar>

    <NavBar>
      <Keyhole>
        <RoundButton aria-label="Back"><Chevron size={38} color="#fff" rotate={90} stroke={3} /></RoundButton>
        <ForwardButton aria-label="Forward"><Chevron size={26} color="#f2f2f0" rotate={-90} stroke={4} /></ForwardButton>
        <IconButton $width={32} aria-label="Recent pages"><Caret size={12} /></IconButton>
      </Keyhole>
      <NavIcons>
        <IconButton aria-label="Reload"><Reload /></IconButton>
        <IconButton aria-label="Stop"><Stop /></IconButton>
        <IconButton $width={46} aria-label="New tab"><NewTab /></IconButton>
        <IconButton $width={36} aria-label="Home"><Home /></IconButton>
      </NavIcons>
      <LocationBar>
        <Identity><Gmail />google.com</Identity>
        <LocationInput aria-label="Address" defaultValue="https://mail.google.com/a/billingsschools.org/#contacts" />
        <IconButton aria-label="Subscribe"><Rss /></IconButton>
        <IconButton $width={44} aria-label="Bookmark this page"><Star /></IconButton>
        <IconButton $width={30} aria-label="History"><Caret size={10} /></IconButton>
      </LocationBar>
      <SearchBar>
        <EngineButton aria-label="Search engine"><Google /><Caret size={10} /></EngineButton>
        <SearchInput aria-label="Web search" defaultValue="journey video game" />
        <IconButton aria-label="Go"><Magnifier /></IconButton>
      </SearchBar>
    </NavBar>

    <BookmarksBar>
      {bookmarks.map(({ icon, label, gap }) => (
        <Bookmark key={label} href="#" $gap={gap}>{icon}{label}</Bookmark>
      ))}
    </BookmarksBar>

    <TabStrip>
      {tabs.map(({ icon, label, active }) => (
        <Tab key={label} $active={active}>
          {icon}
          <TabTitle>{label}</TabTitle>
          <TabClose $active={active} aria-label="Close tab"><CloseX /></TabClose>
        </Tab>
      ))}
      <TabTool $width={57} aria-label="Open a new tab"><Plus color="#8c897d" size={18} stroke={3} /></TabTool>
      <TabTool $width={34} aria-label="List all tabs"><Caret size={12} color="#777468" /></TabTool>
    </TabStrip>

    <Viewport>
      <Page>
        <GoogleBar>
          <strong>Mail</strong>
          <PageLink href="#">Calendar</PageLink>
          <PageLink href="#">Documents</PageLink>
          <PageLink href="#">Sites</PageLink>
          <MoreApps>
            <PageLink href="#">more</PageLink>
            <Caret size={13} color="#2f55ad" tall />
          </MoreApps>
          <Account>
            <strong>honeac@billingsschools.org</strong>|
            <PageLink href="#">Settings</PageLink>|
            <PageLink href="#">Help</PageLink>|
            <PageLink href="#">Sign out</PageLink>
          </Account>
        </GoogleBar>

        <Masthead>
          <Brand>
            <BellTower />
            <BrandText><strong>BILLINGS</strong>Public Schools</BrandText>
          </Brand>
          <MailSearch>
            <MailInput aria-label="Search mail" />
            <MailButton type="button">Search Mail</MailButton>
            <MailButton type="button">Search the Web</MailButton>
            <SearchLinks>
              <PageLink href="#">Show search options</PageLink>
              <PageLink href="#">Create a filter</PageLink>
            </SearchLinks>
          </MailSearch>
        </Masthead>

        <Columns>
          <Sidebar>
            <NavBlock $pad="0 0 20px 70px">
              <PageLink href="#" $bold>Compose Mail</PageLink>
            </NavBlock>
            <NavBlock $pad="0 0 0 74px">
              <PageLink href="#" $bold>Inbox (1)</PageLink>
              <NavRow>
                <PageLink href="#">Starred</PageLink>
                <Star size={30} fill="#f3ea3c" stroke="#66706a" />
              </NavRow>
              <PageLink href="#">Sent Mail</PageLink>
              <PageLink href="#">Drafts</PageLink>
            </NavBlock>
            <Rule />
            <NavBlock $pad="0 0 0 40px">
              {labels.map(([label, color]) => (
                <NavRow key={label}>
                  <Swatch $color={color} />
                  <PageLink href="#">{label}</PageLink>
                </NavRow>
              ))}
            </NavBlock>
            <NavBlock $pad="0 0 0 70px">
              <NavRow>
                <PageLink href="#">4 more</PageLink>
                <Caret size={12} color="#2f55ad" tall />
              </NavRow>
            </NavBlock>
            <ContactsTab href="#">Contacts</ContactsTab>
            <NavBlock $pad="0 0 0 70px">
              <PageLink href="#">Tasks</PageLink>
            </NavBlock>

            <ChatBox>
              <ChatHeader><Collapse aria-label="Collapse chat" />Chat</ChatHeader>
              <ChatInput aria-label="Chat search" placeholder="Search, add, or invite" />
              <MyStatus>
                <Person>Charles Honea</Person>
                <StatusLine>Set status here<Caret size={14} color="#777" tall /></StatusLine>
              </MyStatus>
              <Person>Mary Ritchie</Person>
              <Person>schwartzkj</Person>
              <StatusLine>Is at his desk</StatusLine>
              <Person $away>Allan Audet</Person>
            </ChatBox>
          </Sidebar>

          <Panel>
            <PanelBar>
              <BoxButton $gap={12} aria-label="New contact"><Plus /><PersonIcon /></BoxButton>
              <BoxButton $gap={12} aria-label="New group"><Plus /><PersonIcon group /></BoxButton>
              <ContactSearch>
                <SmallMagnifier />
                <input aria-label="Search contacts" placeholder="Search contacts" />
              </ContactSearch>
              <BoxButton>Search</BoxButton>
              <PanelLinks>
                <PageLink href="#" $plain>Import</PageLink>
                <PageLink href="#" $plain>Export</PageLink>
                <PageLink href="#" $plain>Print</PageLink>
              </PanelLinks>
            </PanelBar>

            <PanelBody>
              <GroupList>
                <Group $active>My Contacts<span>3</span></Group>
                <GroupRule />
                <Group>All Contacts<span>12</span></Group>
                <Group>Most Contacted<span>6</span></Group>
              </GroupList>

              <ContactList>
                <SelectBar>
                  <span>
                    Select: <PageLink href="#" $plain>All</PageLink>, <PageLink href="#" $plain>None</PageLink>
                  </span>
                </SelectBar>
                {contacts.map(name => (
                  <Contact key={name} $active={name === 'Jerry Garcia'}>
                    <Check type="checkbox" defaultChecked={name === 'Jerry Garcia'} />
                    {name}
                  </Contact>
                ))}
              </ContactList>

              <Detail>
                <DetailBar>
                  <BoxButton $gap={7}><Pencil />Edit</BoxButton>
                  <BoxButton $gap={7}><PersonIcon group />Groups<Caret size={13} color="#888" tall /></BoxButton>
                  <Spacer />
                  <BoxButton $gap={4}><Trash />Delete contact</BoxButton>
                </DetailBar>
                <DetailBody>
                  <Fields>
                    <Name>Jerry Garcia</Name>
                    <div>Hippie jamster</div>
                    <div><PageLink href="#" $plain>gratefuldude@deadhippies.biz</PageLink> <Muted>- Other</Muted></div>
                    <SelectRow>
                      <label htmlFor="chat-list">Show in chat list:</label>
                      <SelectBox>
                        <select id="chat-list"><option>Auto</option></select>
                        <SelectArrow><Chevron /></SelectArrow>
                      </SelectBox>
                    </SelectRow>
                    <div>Recent conversations: <PageLink href="#" $plain>Show</PageLink></div>
                  </Fields>
                  <Silhouette />
                </DetailBody>
              </Detail>
            </PanelBody>
          </Panel>
        </Columns>
      </Page>

      <ScrollBar>
        <ScrollButton aria-label="Scroll up"><Chevron rotate={180} /></ScrollButton>
        <ScrollThumb>
          <svg width="16" height="18" viewBox="0 0 16 18">
            <path d="M0 2h15M0 7h15M0 12h15M0 17h15" stroke="#eef3ff" strokeWidth="2" />
          </svg>
        </ScrollThumb>
        <ScrollTrack />
        <ScrollButton aria-label="Scroll down"><Chevron /></ScrollButton>
      </ScrollBar>

      <Note>
        <li>Verify that your contacts are correct</li>
      </Note>
    </Viewport>

    <StatusBar>
      Done
      <LockCell><Lock /></LockCell>
    </StatusBar>

    <TaskBar>
      <Start><WindowsFlag />start</Start>
      <Tasks>
        <Task><ClockIcon /><TaskText>Inbox - Microsoft O...</TaskText></Task>
        <Task $active><Firefox /><TaskText><Count>4</Count> Firefox</TaskText><Caret size={12} color="#fff" /></Task>
        <Task><WordIcon /><TaskText><Count>2</Count> Microsoft Office...</TaskText><Caret size={12} color="#fff" /></Task>
        <Task><PowerPointIcon /><TaskText>Chapter 25 Section 1</TaskText></Task>
        <Task><PowerPointIcon /><TaskText>Presentation1</TaskText></Task>
      </Tasks>
      <Language>
        <HelpIcon />
        <LanguageTools>
          <RestoreIcon size={15} />
          <Caret size={11} color="#fff" />
        </LanguageTools>
      </Language>
      <Tray>
        <TrayArrow aria-label="Show hidden icons"><Chevron color="#fff" rotate={90} stroke={4} /></TrayArrow>
        <ClockIcon />
        <Antivirus />
        <time>1:37 PM</time>
      </Tray>
    </TaskBar>
  </Window>
);

export default App;
